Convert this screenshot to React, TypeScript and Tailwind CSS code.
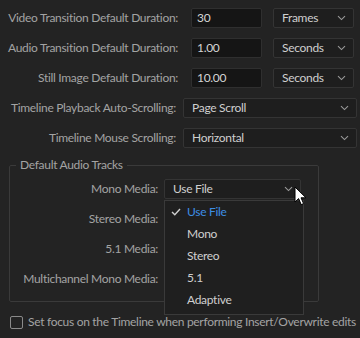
import { ReactNode } from 'react'

const font = { fontFamily: 'Lato, "Noto Sans", sans-serif' }

function Chevron() {
  return (
    <svg width="9" height="6" viewBox="0 0 9 6" className="shrink-0">
      <path d="M1 1.2 L4.5 4.6 L8 1.2" fill="none" stroke="#9a9a9a" strokeWidth="1.1" />
    </svg>
  )
}

function Select({ value, w }: { value: string; w: string }) {
  return (
    <div className={`${w} h-[20px] flex items-center justify-between pl-[8px] pr-[7px] bg-[#1e1e1e] border border-[#343434] rounded-[2px] text-[#cfcfcf]`}>
      <span>{value}</span>
      <Chevron />
    </div>
  )
}

function Row({ label, lw, children }: { label: string; lw: string; children: ReactNode }) {
  return (
    <div className="flex items-center h-[20px]">
      <div className={`${lw} shrink-0 text-right text-[#a3a3a3] whitespace-nowrap`}>{label}</div>
      {children}
    </div>
  )
}

function Field({ value }: { value: string }) {
  return (
    <div className="ml-[13px] w-[71px] h-[20px] flex items-center px-[5px] bg-[#151515] border border-[#2f2f2f] rounded-[2px] text-[#d4d4d4]">
      {value}
    </div>
  )
}

export default function App() {
  const items = ['Use File', 'Mono', 'Stereo', '5.1', 'Adaptive']
  return (
    <div className="relative w-[360px] h-[338px] bg-[#232323] text-[12px] tracking-[-0.3px] overflow-hidden" style={font}>
      <div className="flex flex-col gap-[10px] pt-[8px]">
        <Row label="Video Transition Default Duration:" lw="w-[178px]">
          <Field value="30" />
          <div className="ml-[11px]"><Select value="Frames" w="w-[81px]" /></div>
        </Row>
        <Row label="Audio Transition Default Duration:" lw="w-[178px]">
          <Field value="1.00" />
          <div className="ml-[11px]"><Select value="Seconds" w="w-[81px]" /></div>
        </Row>
        <Row label="Still Image Default Duration:" lw="w-[178px]">
          <Field value="10.00" />
          <div className="ml-[11px]"><Select value="Seconds" w="w-[81px]" /></div>
        </Row>
        <Row label="Timeline Playback Auto-Scrolling:" lw="w-[176px]">
          <div className="ml-[7px]"><Select value="Page Scroll" w="w-[174px]" /></div>
        </Row>
        <Row label="Timeline Mouse Scrolling:" lw="w-[176px]">
          <div className="ml-[7px]"><Select value="Horizontal" w="w-[174px]" /></div>
        </Row>
      </div>

      <fieldset className="mt-[9px] ml-[9px] w-[310px] border border-[#3a3a3a] rounded-[2px] pt-[6px] pb-[12px]">
        <legend className="ml-[6px] px-[4px] text-[#a3a3a3] leading-[16px]">Default Audio Tracks</legend>
        <div className="flex flex-col gap-[10px]">
          {['Mono Media:', 'Stereo Media:', '5.1 Media:', 'Multichannel Mono Media:'].map((l, i) => (
            <Row key={l} label={l} lw="w-[148px]">
              <div className="ml-[6px]"><Select value={i === 0 ? 'Use File' : ''} w="w-[137px]" /></div>
            </Row>
          ))}
        </div>
      </fieldset>

      <div className="flex items-center mt-[11px] ml-[10px]">
        <div className="shrink-0 w-[13px] h-[13px] border border-[#8a8a8a] rounded-[2px]" />
        <span className="ml-[5px] text-[#a3a3a3] whitespace-nowrap">Set focus on the Timeline when performing Insert/Overwrite edits</span>
      </div>

      <div className="absolute left-[164px] top-[200px] w-[140px] h-[115px] bg-[#1f1f1f] border border-[#3a3a3a]">
        {items.map((it, i) => (
          <div key={it} className="h-[22px] flex items-center">
            <div className="w-[22px] flex justify-center">
              {i === 0 && (
                <svg width="10" height="8" viewBox="0 0 10 8">
                  <path d="M1 4 L3.8 6.8 L9 1" fill="none" stroke="#cfcfcf" strokeWidth="1.4" />
                </svg>
              )}
            </div>
            <span className={i === 0 ? 'text-[#3d8ee5]' : 'text-[#cfcfcf]'}>{it}</span>
          </div>
        ))}
      </div>

      <svg className="absolute left-[294px] top-[186px]" width="13" height="20" viewBox="0 0 13 20">
        <path d="M1 1 L1 16 L4.6 12.6 L7.2 18.6 L9.6 17.6 L7 11.8 L12 11.8 Z" fill="#ffffff" stroke="#000000" strokeWidth="1" strokeLinejoin="round" />
      </svg>
    </div>
  )
}
